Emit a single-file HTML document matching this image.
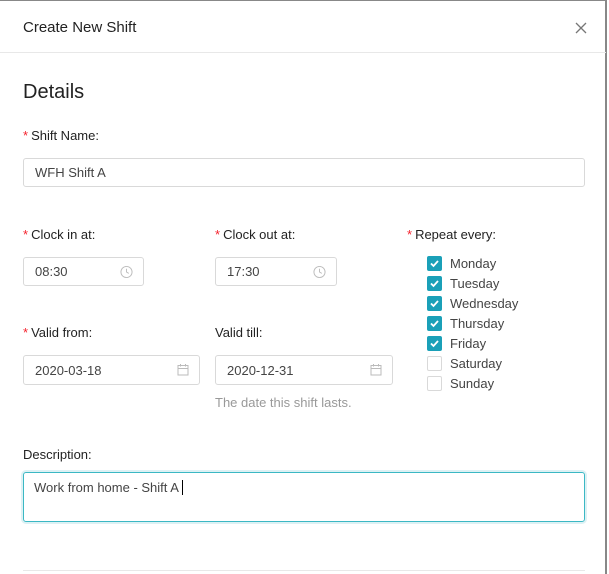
<!DOCTYPE html>
<html><head><style>
*{box-sizing:border-box;margin:0;padding:0}
body{width:609px;height:574px;background:#fff;font-family:"Liberation Sans",sans-serif;color:#333;position:relative;overflow:hidden;font-size:13px}
.frame{position:absolute;left:0;top:0;width:607px;height:574px;border-top:1px solid #888;border-right:2px solid #888}
.a{position:absolute}
.lbl{font-size:13px;color:#222}
.lbl b{color:#f5222d;font-weight:normal;margin-right:3px}
.in{position:absolute;border:1px solid #d9d9d9;border-radius:3px;background:#fff;font-size:13px;color:#444;padding-left:11px;display:flex;align-items:center}
.ic{position:absolute;right:10px;top:50%;transform:translateY(-50%)}
.cb{position:absolute;left:427px;width:15px;height:15px;border-radius:2px}
.cb.on{background:#1aa0b8}
.cb.off{border:1px solid #d9d9d9}
.day{position:absolute;left:450px;font-size:13px;color:#444}
</style></head><body>
<div class="frame"></div>
<div class="a" style="left:23px;top:19px;font-size:15px;color:#222">Create New Shift</div>
<svg class="a" style="left:575px;top:22px" width="12" height="12" viewBox="0 0 12 12"><path d="M1 1L11 11M11 1L1 11" stroke="#777" stroke-width="1.3"/></svg>
<div class="a" style="left:0;top:52px;width:606px;height:1px;background:#e8e8e8"></div>
<div class="a" style="left:23px;top:81px;font-size:20px;color:#222">Details</div>
<div class="a lbl" style="left:23px;top:128px"><b>*</b>Shift Name:</div>
<div class="in" style="left:23px;top:158px;width:562px;height:29px">WFH Shift A</div>
<div class="a lbl" style="left:23px;top:227px"><b>*</b>Clock in at:</div>
<div class="a lbl" style="left:215px;top:227px"><b>*</b>Clock out at:</div>
<div class="a lbl" style="left:407px;top:227px"><b>*</b>Repeat every:</div>
<div class="in" style="left:23px;top:257px;width:121px;height:29px">08:30<svg class="ic" width="13" height="13" viewBox="0 0 14 14"><circle cx="7" cy="7" r="6" fill="none" stroke="#bbb"/><path d="M7 3.5V7L9.5 8.5" fill="none" stroke="#bbb"/></svg></div>
<div class="in" style="left:215px;top:257px;width:122px;height:29px">17:30<svg class="ic" width="13" height="13" viewBox="0 0 14 14"><circle cx="7" cy="7" r="6" fill="none" stroke="#bbb"/><path d="M7 3.5V7L9.5 8.5" fill="none" stroke="#bbb"/></svg></div>
<div class="a lbl" style="left:23px;top:325px"><b>*</b>Valid from:</div>
<div class="a lbl" style="left:215px;top:325px">Valid till:</div>
<div class="in" style="left:23px;top:355px;width:177px;height:30px">2020-03-18<svg class="ic" width="12" height="12" viewBox="0 0 12 12"><rect x="1" y="1.5" width="10" height="9.5" fill="none" stroke="#bbb"/><path d="M1 4.5H11M3.5 0V2.5M8.5 0V2.5" stroke="#bbb"/></svg></div>
<div class="in" style="left:215px;top:355px;width:178px;height:30px">2020-12-31<svg class="ic" width="12" height="12" viewBox="0 0 12 12"><rect x="1" y="1.5" width="10" height="9.5" fill="none" stroke="#bbb"/><path d="M1 4.5H11M3.5 0V2.5M8.5 0V2.5" stroke="#bbb"/></svg></div>
<div class="a" style="left:215px;top:395px;color:#999;font-size:13px">The date this shift lasts.</div>
<div class="cb on" style="top:256px"><svg width="15" height="15"><path d="M4 7.5L6.5 10L11 5" fill="none" stroke="#fff" stroke-width="1.8"/></svg></div><div class="day" style="top:256px">Monday</div>
<div class="cb on" style="top:276px"><svg width="15" height="15"><path d="M4 7.5L6.5 10L11 5" fill="none" stroke="#fff" stroke-width="1.8"/></svg></div><div class="day" style="top:276px">Tuesday</div>
<div class="cb on" style="top:296px"><svg width="15" height="15"><path d="M4 7.5L6.5 10L11 5" fill="none" stroke="#fff" stroke-width="1.8"/></svg></div><div class="day" style="top:296px">Wednesday</div>
<div class="cb on" style="top:316px"><svg width="15" height="15"><path d="M4 7.5L6.5 10L11 5" fill="none" stroke="#fff" stroke-width="1.8"/></svg></div><div class="day" style="top:316px">Thursday</div>
<div class="cb on" style="top:336px"><svg width="15" height="15"><path d="M4 7.5L6.5 10L11 5" fill="none" stroke="#fff" stroke-width="1.8"/></svg></div><div class="day" style="top:336px">Friday</div>
<div class="cb off" style="top:356px"></div><div class="day" style="top:356px">Saturday</div>
<div class="cb off" style="top:376px"></div><div class="day" style="top:376px">Sunday</div>
<div class="a lbl" style="left:23px;top:447px">Description:</div>
<div class="a" style="left:23px;top:472px;width:562px;height:50px;border:1px solid #3bb8c4;border-radius:3px;box-shadow:0 0 0 2px rgba(26,160,184,0.15);padding:7px 10px;color:#444">Work from home - Shift A <span style="display:inline-block;width:1px;height:15px;background:#000;vertical-align:-3px"></span></div>
<div class="a" style="left:23px;top:570px;width:562px;height:1px;background:#e8e8e8"></div>
</body></html>
